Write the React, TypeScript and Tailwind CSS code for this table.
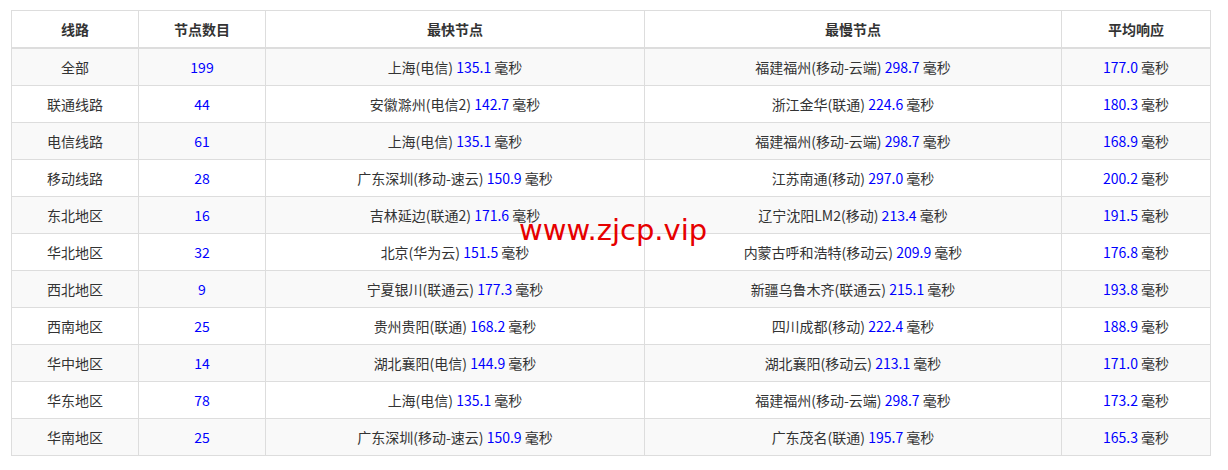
const rows = [
  ["全部", "199", "上海(电信)", "135.1", "福建福州(移动-云端)", "298.7", "177.0"],
  ["联通线路", "44", "安徽滁州(电信2)", "142.7", "浙江金华(联通)", "224.6", "180.3"],
  ["电信线路", "61", "上海(电信)", "135.1", "福建福州(移动-云端)", "298.7", "168.9"],
  ["移动线路", "28", "广东深圳(移动-速云)", "150.9", "江苏南通(移动)", "297.0", "200.2"],
  ["东北地区", "16", "吉林延边(联通2)", "171.6", "辽宁沈阳LM2(移动)", "213.4", "191.5"],
  ["华北地区", "32", "北京(华为云)", "151.5", "内蒙古呼和浩特(移动云)", "209.9", "176.8"],
  ["西北地区", "9", "宁夏银川(联通云)", "177.3", "新疆乌鲁木齐(联通云)", "215.1", "193.8"],
  ["西南地区", "25", "贵州贵阳(联通)", "168.2", "四川成都(移动)", "222.4", "188.9"],
  ["华中地区", "14", "湖北襄阳(电信)", "144.9", "湖北襄阳(移动云)", "213.1", "171.0"],
  ["华东地区", "78", "上海(电信)", "135.1", "福建福州(移动-云端)", "298.7", "173.2"],
  ["华南地区", "25", "广东深圳(移动-速云)", "150.9", "广东茂名(联通)", "195.7", "165.3"],
];

const cell = "border border-[#dddddd] px-2 py-2 text-center align-middle";

export default function App() {
  return (
    <div className="relative w-[1228px] h-[470px] bg-white pt-[10px] pl-[11px] font-['Noto_Sans_CJK_SC','Noto_Sans',sans-serif] text-[14px] leading-[20px] text-[#333333]">
      <table className="w-[1199px] border-collapse table-fixed">
        <colgroup>
          <col className="w-[127px]" />
          <col className="w-[127px]" />
          <col className="w-[379px]" />
          <col className="w-[417px]" />
          <col className="w-[149px]" />
        </colgroup>
        <thead>
          <tr>
            <th className={`${cell} border-b-2 font-bold`}>线路</th>
            <th className={`${cell} border-b-2 font-bold`}>节点数目</th>
            <th className={`${cell} border-b-2 font-bold`}>最快节点</th>
            <th className={`${cell} border-b-2 font-bold`}>最慢节点</th>
            <th className={`${cell} border-b-2 font-bold`}>平均响应</th>
          </tr>
        </thead>
        <tbody>
          {rows.map((r, i) => (
            <tr key={i} className={i % 2 === 0 ? "bg-[#f9f9f9]" : "bg-white"}>
              <td className={cell}>{r[0]}</td>
              <td className={`${cell} text-[#0000ff]`}>{r[1]}</td>
              <td className={cell}>
                {r[2]} <span className="text-[#0000ff]">{r[3]}</span> 毫秒
              </td>
              <td className={cell}>
                {r[4]} <span className="text-[#0000ff]">{r[5]}</span> 毫秒
              </td>
              <td className={cell}>
                <span className="text-[#0000ff]">{r[6]}</span> 毫秒
              </td>
            </tr>
          ))}
        </tbody>
      </table>

      {/* watermark */}
      <div className="absolute left-[519px] top-[213px] font-['DejaVu_Sans',sans-serif] text-[29px] leading-[34px] text-[#e60000]">
        www.zjcp.vip
      </div>
    </div>
  );
}
